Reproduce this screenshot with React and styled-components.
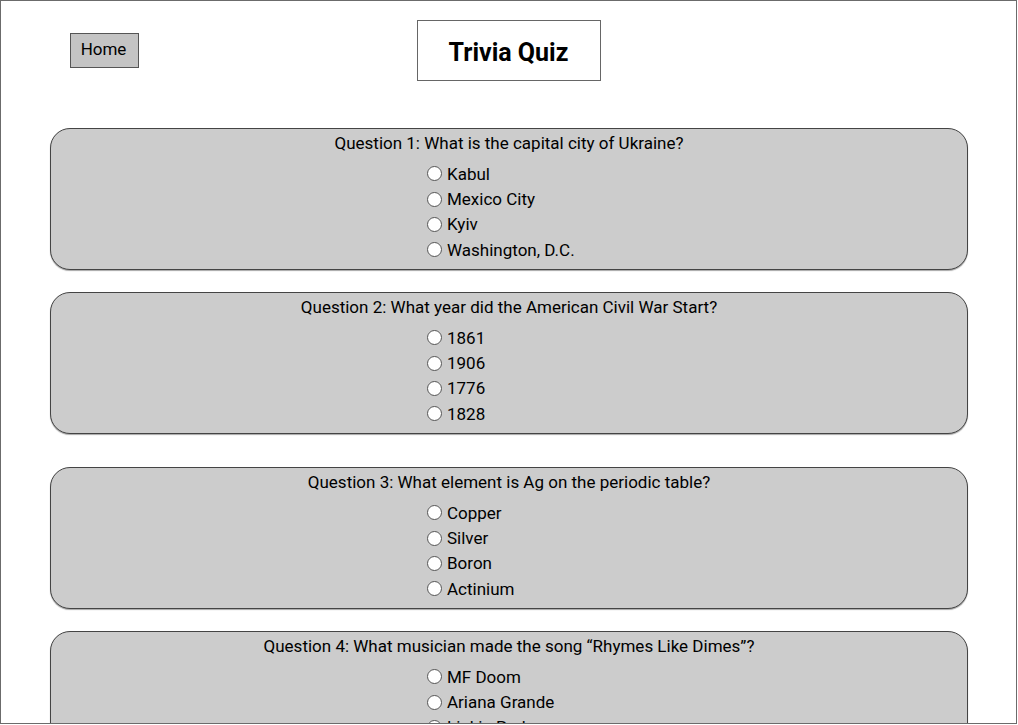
import React from "react";
import styled, { createGlobalStyle } from "styled-components";

const GlobalStyle = createGlobalStyle`
  * {
    box-sizing: border-box;
  }
  body {
    margin: 0;
    background: #fff;
    font-family: Roboto, "Liberation Sans", sans-serif;
    color: #000;
  }
`;

const StyledFrame = styled.div`
  width: 1017px;
  height: 724px;
  border: 1px solid #6b6b6b;
  overflow: hidden;
  background: #fff;
`;

const StyledHeader = styled.header`
  display: grid;
  grid-template-columns: 1fr auto 1fr;
  align-items: start;
  padding-top: 19px;
`;

const StyledHomeButton = styled.button`
  justify-self: start;
  margin: 13px 0 0 69px;
  width: 69px;
  height: 35px;
  padding: 0 2px 4px 0;
  background: #c4c4c4;
  border: 1px solid #555;
  border-radius: 0;
  font-family: Roboto, "Liberation Sans", sans-serif;
  font-size: 17px;
  color: #000;
  cursor: pointer;
`;

const StyledTitle = styled.h1`
  margin: 0;
  width: 184px;
  height: 61px;
  padding-top: 3px;
  display: flex;
  align-items: center;
  justify-content: center;
  border: 1px solid #666;
  font-size: 25px;
  font-weight: 700;
`;

const StyledQuiz = styled.main`
  display: flex;
  flex-direction: column;
  padding: 0 48px 0 49px;
`;

const StyledCard = styled.section`
  margin-top: ${({ $gap }) => `${$gap}px`};
  height: 142px;
  flex-shrink: 0;
  background: #cccccc;
  border: 1px solid #444;
  border-radius: 20px;
  box-shadow: 0 1px 1px rgba(0, 0, 0, 0.35);
  padding-top: 5px;
  display: flex;
  flex-direction: column;
`;

const StyledQuestion = styled.h2`
  margin: 0;
  text-align: center;
  font-size: 17px;
  font-weight: 400;
  line-height: 19px;
`;

const StyledOptions = styled.div`
  display: flex;
  flex-direction: column;
  margin: 8px 0 0 376px;
`;

const StyledOption = styled.label`
  display: flex;
  align-items: center;
  gap: 5px;
  height: 25.4px;
  font-size: 17px;
  cursor: pointer;
`;

const StyledRadio = styled.input`
  appearance: none;
  margin: 0;
  width: 15px;
  height: 15px;
  border-radius: 50%;
  background: #fff;
  border: 1px solid #555;
  flex-shrink: 0;
  &:checked {
    background: radial-gradient(circle, #333 0 3px, #fff 4px);
  }
`;

const questions = [
  {
    gap: 47,
    text: "Question 1: What is the capital city of Ukraine?",
    options: ["Kabul", "Mexico City", "Kyiv", "Washington, D.C."],
  },
  {
    gap: 22,
    text: "Question 2: What year did the American Civil War Start?",
    options: ["1861", "1906", "1776", "1828"],
  },
  {
    gap: 33,
    text: "Question 3: What element is Ag on the periodic table?",
    options: ["Copper", "Silver", "Boron", "Actinium"],
  },
  {
    gap: 22,
    text: "Question 4: What musician made the song \u201CRhymes Like Dimes\u201D?",
    options: ["MF Doom", "Ariana Grande", "Linkin Park", "Drake"],
  },
];

const App = () => {
  return (
    <>
      <GlobalStyle />
      <StyledFrame>
        <StyledHeader>
          <StyledHomeButton>Home</StyledHomeButton>
          <StyledTitle>Trivia Quiz</StyledTitle>
        </StyledHeader>
        <StyledQuiz>
          {questions.map((q, i) => (
            <StyledCard key={i} $gap={q.gap}>
              <StyledQuestion>{q.text}</StyledQuestion>
              <StyledOptions>
                {q.options.map((opt) => (
                  <StyledOption key={opt}>
                    <StyledRadio type="radio" name={`q${i + 1}`} value={opt} />
                    {opt}
                  </StyledOption>
                ))}
              </StyledOptions>
            </StyledCard>
          ))}
        </StyledQuiz>
      </StyledFrame>
    </>
  );
};

export default App;
